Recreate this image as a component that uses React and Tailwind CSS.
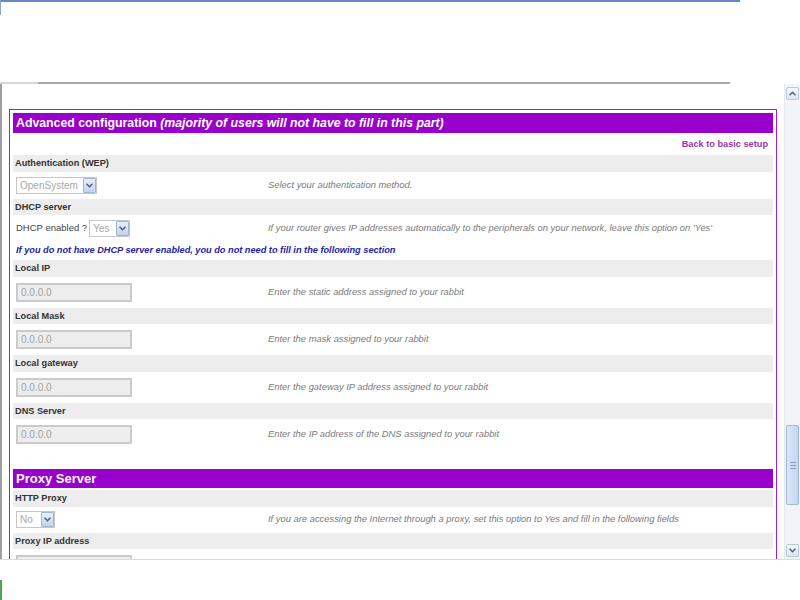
import React from 'react';

const Chevron = ({ up }) => (
  <svg width="7" height="5" viewBox="0 0 7 5">
    <path d={up ? 'M0.5 4.2 L3.5 1.2 L6.5 4.2' : 'M0.5 0.8 L3.5 3.8 L6.5 0.8'} fill="none" stroke="#4a5f86" strokeWidth="1.5" />
  </svg>
);

const Select = ({ value, className }) => (
  <div className={`flex h-[17px] items-stretch border border-[#c6c6c6] bg-white ${className}`}>
    <span className="flex-1 pl-[3px] text-[10px] leading-[15px] text-[#a8a8a8]">{value}</span>
    <span className="flex w-[13px] items-center justify-center rounded-[1px] border border-[#9fb5d8] bg-gradient-to-b from-[#e8eff9] to-[#c2d3ed]">
      <Chevron />
    </span>
  </div>
);

const IpInput = ({ value = '0.0.0.0' }) => (
  <div className="h-[19px] w-[116px] border-2 border-[#cbcbcb] bg-[#ededed] pl-[3px] text-[10px] leading-[15px] text-[#a0a0a0]">
    {value}
  </div>
);

const Label = ({ children }) => (
  <div className="h-[16.5px] bg-[#ededed] pl-[2px] text-[9.2px] font-bold leading-[16.5px] text-[#333]">{children}</div>
);

const Row = ({ h, children, help }) => (
  <div className={`grid grid-cols-[255px_1fr] items-center ${h}`}>
    <div className="flex items-center pl-[3px]">{children}</div>
    <div className="text-[9.4px] italic text-[#7a7a7a]">{help}</div>
  </div>
);

const ipFields = [
  { label: 'Local IP', help: 'Enter the static address assigned to your rabbit' },
  { label: 'Local Mask', help: 'Enter the mask assigned to your rabbit' },
  { label: 'Local gateway', help: 'Enter the gateway IP address assigned to your rabbit' },
  { label: 'DNS Server', help: 'Enter the IP address of the DNS assigned to your rabbit' },
];

export default function App() {
  return (
    <div className="relative h-[600px] w-[800px] overflow-hidden bg-white font-['Liberation_Sans',Arial,sans-serif]">
      <div className="h-[2px] w-[740px] bg-[#6a87c2]" />
      <div className="absolute left-0 top-0 h-[15px] w-[1px] bg-[#8aa2d0]" />
      <div className="h-[80px]" />
      <div className="flex h-[2px] w-[730px]">
        <div className="w-[38px] bg-[#d6d6d6]" />
        <div className="flex-1 bg-[#a8a8a8]" />
      </div>

      <div className="flex h-[476px] border-b border-[#dcdcdc]">
        <div className="flex-1 overflow-hidden border-l-2 border-[#a0a0a0]">
          <div className="ml-[7px] mt-[25px] w-[768px] border border-[#a020c8] p-[3px]">
            <div className="h-[20px] bg-[#9900cc] pl-[3px] text-[12.3px] font-bold leading-[20px] text-white">
              Advanced configuration <i>(majority of users will not have to fill in this part)</i>
            </div>
            <div className="h-[22px] pr-[5px] text-right text-[9.2px] font-bold leading-[22px] text-[#9a35a8]">
              Back to basic setup
            </div>

            <Label>Authentication (WEP)</Label>
            <Row h="h-[27px]" help="Select your authentication method.">
              <Select value="OpenSystem" className="w-[81px]" />
            </Row>

            <Label>DHCP server</Label>
            <Row h="h-[27px]" help="If your router gives IP addresses automatically to the peripherals on your network, leave this option on 'Yes'">
              <span className="mr-[2px] text-[9.5px] text-[#444]">DHCP enabled ?</span>
              <Select value="Yes" className="w-[41px]" />
            </Row>
            <div className="h-[18px] pl-[3px] text-[9.2px] font-bold italic leading-[16px] text-[#2323a6]">
              If you do not have DHCP server enabled, you do not need to fill in the following section
            </div>

            {ipFields.map((f) => (
              <div key={f.label}>
                <Label>{f.label}</Label>
                <Row h="h-[31px]" help={f.help}>
                  <IpInput />
                </Row>
              </div>
            ))}

            <div className="h-[19px]" />
            <div className="h-[19px] bg-[#9900cc] pl-[3px] text-[13px] font-bold leading-[19px] text-white">Proxy Server</div>
            <div className="h-[2px]" />
            <Label>HTTP Proxy</Label>
            <Row h="h-[26px]" help="If you are accessing the Internet through a proxy, set this option to Yes and fill in the following fields">
              <Select value="No" className="w-[39px]" />
            </Row>
            <Label>Proxy IP address</Label>
            <div className="pl-[3px] pt-[6px]">
              <IpInput value="" />
            </div>
          </div>
        </div>

        <div className="flex w-[16px] flex-col border-l border-[#e3e8f0] bg-[#f1f4f9] pt-[3px] pb-[2px]">
          <div className="mx-[1px] flex h-[13px] items-center justify-center rounded-[2px] border border-[#b9c8df] bg-gradient-to-b from-[#f7f9fd] to-[#dde6f3]">
            <Chevron up />
          </div>
          <div className="h-[325px]" />
          <div className="mx-[1px] flex h-[80px] flex-col items-center justify-center gap-[2px] rounded-[2px] border border-[#9fb6d8] bg-gradient-to-r from-[#dce7f7] to-[#c5d6f0]">
            <div className="h-[1px] w-[6px] bg-[#8a9cbc]" />
            <div className="h-[1px] w-[6px] bg-[#8a9cbc]" />
            <div className="h-[1px] w-[6px] bg-[#8a9cbc]" />
          </div>
          <div className="flex-1" />
          <div className="mx-[1px] flex h-[13px] items-center justify-center rounded-[2px] border border-[#b9c8df] bg-gradient-to-b from-[#f7f9fd] to-[#dde6f3]">
            <Chevron />
          </div>
        </div>
      </div>

      <div className="absolute bottom-0 left-0 h-[20px] w-[2px] bg-[#4fa34f]" />
    </div>
  );
}
